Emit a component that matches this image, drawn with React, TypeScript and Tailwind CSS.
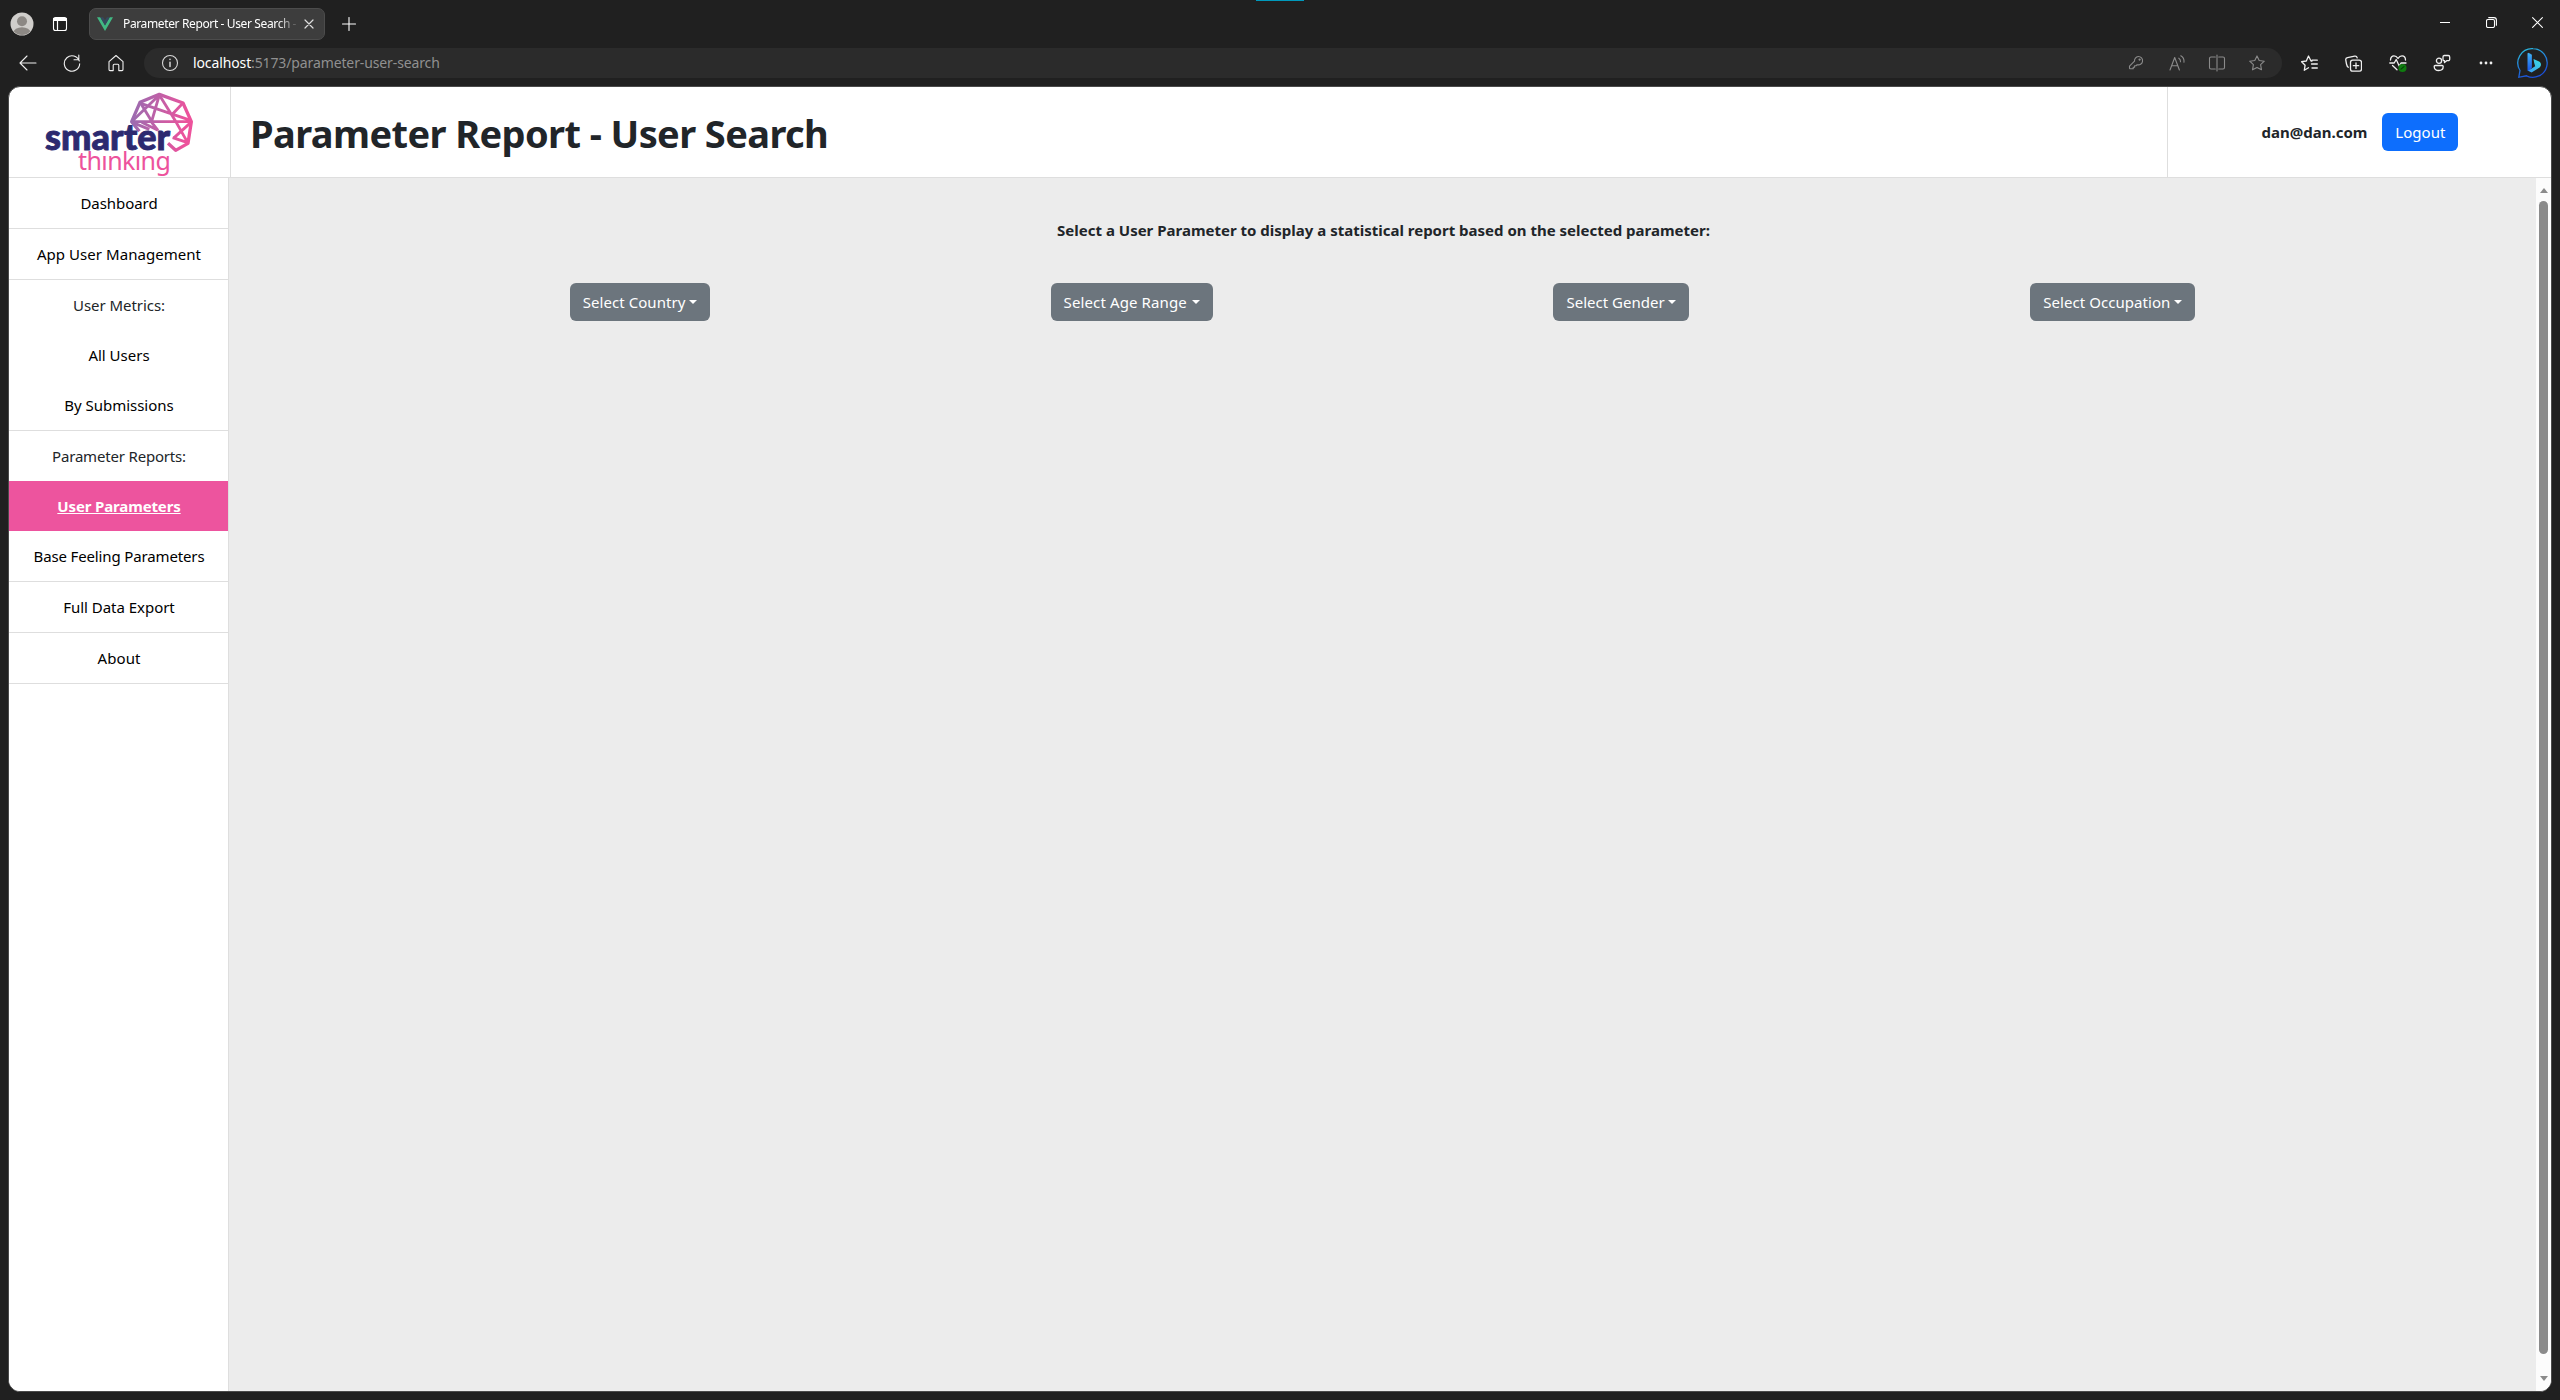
import React from 'react'

const SANS = "font-['Noto_Sans','Open_Sans',sans-serif]"

function Svg({ size = 16, className = '', children }: { size?: number; className?: string; children: React.ReactNode }) {
  return (
    <svg width={size} height={size} viewBox={`0 0 ${size} ${size}`} fill="none" stroke="currentColor" strokeWidth="1.1" strokeLinecap="round" strokeLinejoin="round" className={`block shrink-0 ${className}`}>
      {children}
    </svg>
  )
}

const STAR = 'M8 .9 10.2 5.500 15.300 6.200 11.600 9.700 12.500 14.800 8 12.400 3.500 14.800 4.400 9.700 .7 6.200 5.800 5.500Z'

function TitleBar() {
  return (
    <div className="flex h-[48px] items-center">
      <svg width="24" height="24" viewBox="0 0 24 24" className="ml-[10px] block shrink-0">
        <clipPath id="avatar"><circle cx="12" cy="12" r="11" /></clipPath>
        <circle cx="12" cy="12" r="11.500" fill="#d0cecb" />
        <g clipPath="url(#avatar)">
          <circle cx="12" cy="9.200" r="5" fill="#8c8884" />
          <ellipse cx="12" cy="20.500" rx="8.500" ry="5.200" fill="#8c8884" />
        </g>
      </svg>
      <Svg size={16} className="ml-[18px] text-white">
        <rect x="1.500" y="1.500" width="13" height="13" rx="2" />
        <path d="M1.500 2.600h13M1.500 4.200h13M5.500 5v9.500" strokeWidth="1.200" />
        <path d="M2 2.500h12v2H2z" fill="currentColor" />
      </Svg>
      <div className="ml-[21px] flex h-[32px] w-[236px] items-center rounded-[7px] border border-[#4c4c4c] bg-[#3d3d3d]">
        <svg width="16" height="16" viewBox="0 0 16 16" className="ml-[7px] mt-[-1px] block shrink-0">
          <path d="M0 1.200h3.300L8 9.300l4.700-8.100H16L8 15Z" fill="#41b883" />
          <path d="M3.200 1.200h3L8 4.300l1.800-3.100h3L8 9.400Z" fill="#35495e" />
        </svg>
        <div className="ml-[10px] w-[173px] whitespace-nowrap text-[12px] leading-[16px] tracking-[-0.37px] text-white [mask-image:linear-gradient(to_right,black_155px,transparent_176px)]">
          Parameter Report - User Search -
        </div>
        <Svg size={10} className="ml-[8px] text-[#dedede]"><path d="m1 1 8 8M9 1 1 9" strokeWidth="1.200" /></Svg>
      </div>
      <Svg size={14} className="ml-[17px] text-white"><path d="M7 .5v13M.5 7h13" /></Svg>
      <div className="ml-auto mt-[-4px] flex items-center text-white">
        <Svg size={10}><path d="M0 5.500h10" strokeWidth="1" /></Svg>
        <Svg size={11} className="ml-[36px]"><rect x=".5" y="2.500" width="8" height="8" rx="1.500" /><path d="M2.700.6H8a2.400 2.400 0 0 1 2.400 2.400v5.200" /></Svg>
        <Svg size={11} className="ml-[35px] mr-[17px]"><path d="m.6.600 9.800 9.800M10.400.600.600 10.400" /></Svg>
      </div>
    </div>
  )
}

function Toolbar() {
  return (
    <div className="flex h-[30px] items-center text-[#efefef]">
      <Svg size={18} className="ml-[19px]"><path d="M8 2 1 9l7 7M1.200 9H17" /></Svg>
      <Svg size={18} className="ml-[26px]"><path d="M16.300 7A7.700 7.700 0 1 0 16.700 9.800M15.800 1v4.800H11" /></Svg>
      <Svg size={18} className="ml-[26px]"><path d="M2 7.600 9 1.500l7 6.100v8a1 1 0 0 1-1 1h-3.200v-5.400a1 1 0 0 0-1-1H7.200a1 1 0 0 0-1 1v5.400H3a1 1 0 0 1-1-1Z" /></Svg>
      <div className="ml-[19px] flex h-[30px] w-[2138px] items-center rounded-full bg-[#2b2b2b]">
        <Svg size={18} className="ml-[17px] text-[#d8d8d8]"><circle cx="9" cy="9" r="7.500" /><path d="M9 8.200v4.200M9 5.300v.2" strokeWidth="1.500" /></Svg>
        <div className="ml-[14px] whitespace-nowrap text-[14px] leading-[20px] tracking-[-0.12px] text-[#909090]">
          <span className="text-white">localhost</span>:5173/parameter-user-search
        </div>
        <div className="ml-auto mr-[17px] flex items-center text-[#8b8b8b]">
          <Svg size={16}>
            <path d="M10.300 1.500a4.200 4.200 0 1 1-1.200 8.200L8 10.800H6.600v1.500H5.200v1.500H2.200a.7.700 0 0 1-.7-.7v-1.900l5-5A4.200 4.200 0 0 1 10.300 1.500Z" />
            <circle cx="11.600" cy="4.600" r=".6" fill="currentColor" />
          </Svg>
          <Svg size={17} className="ml-[25px]"><path d="m1 15 4.700-12.500L10.400 15M2.600 10.800h6.200M9.800 3.200c1.200.8 1.800 2 1.700 3.600M11.800.8c2.300 1.300 3.500 3.400 3.200 6.400" /></Svg>
          <Svg size={18} className="ml-[22px]"><path d="M7.300 3H3a1.500 1.500 0 0 0-1.500 1.500v9A1.500 1.500 0 0 0 3 15h4.300M10.700 3H15a1.500 1.500 0 0 1 1.500 1.500v9A1.500 1.500 0 0 1 15 15h-4.300M9 1v16" /></Svg>
          <Svg size={16} className="ml-[23px]"><path d={STAR} /></Svg>
        </div>
      </div>
      <Svg size={17} className="ml-[19px]"><path d="M11 6H10L7.500 1 5.300 6 .6 6.700l3.500 3.500-.8 5.100L7.500 12.800M11 5.200h5.300M10.500 9h5.800M11 13h5.300" strokeWidth="1.300" /></Svg>
      <Svg size={17} className="ml-[27px]">
        <rect x="5.500" y="5.200" width="11" height="11" rx="2.200" strokeWidth="1.300" /><path d="M11 8v5.400M8.300 10.700h5.400" strokeWidth="1.300" />
        <path d="M3.300 12.200C2 11.500 1.800 10.500 1.500 9L.8 5.200A2.200 2.200 0 0 1 2.500 2.600L9.600 1.200a2.200 2.200 0 0 1 2.600 1.600" strokeWidth="1.300" />
      </Svg>
      <Svg size={18} className="ml-[27px]">
        <path d="M1.500 6C1.500 3.500 3 1.800 5 1.800c1.700 0 3 1 4 2.700 1-1.700 2.300-2.700 4-2.700 2 0 3.500 1.700 3.500 4.200M.8 9h4.400l2-3.500 3 6.500 1.800-3H17M3.500 11.500l4.500 4.300" strokeWidth="1.300" />
        <circle cx="13.500" cy="14" r="4" fill="#0f7b0f" stroke="none" /><path d="m12 15.200 3-2.600" stroke="#06400a" />
      </Svg>
      <Svg size={18} className="ml-[26px]">
        <circle cx="6" cy="6.800" r="2.600" strokeWidth="1.300" />
        <path d="M2.200 11.500h7a1 1 0 0 1 1 1c0 2.500-1.700 4-4.500 4s-4.500-1.500-4.500-4a1 1 0 0 1 1-1ZM11.200 1.500h4a1.500 1.500 0 0 1 1.500 1.500v2.200a1.500 1.500 0 0 1-1.500 1.500h-1.500L11.500 8.500V6.700a1.300 1.300 0 0 1-1.500-1.300V3a1.400 1.400 0 0 1 1.200-1.500Z" strokeWidth="1.300" />
      </Svg>
      <Svg size={16} className="ml-[27px]"><g fill="currentColor" stroke="none"><circle cx="3" cy="8" r="1.400" /><circle cx="8" cy="8" r="1.400" /><circle cx="13" cy="8" r="1.400" /></g></Svg>
      <svg width="32" height="32" viewBox="0 0 32 32" className="ml-auto mr-[11px] block shrink-0">
        <defs>
          <linearGradient id="ring" x1="0" y1="0" x2=".4" y2="1"><stop offset="0" stopColor="#2bc0dc" /><stop offset="1" stopColor="#1b4fd8" /></linearGradient>
          <linearGradient id="stem" x1="0" y1="0" x2="0" y2="1"><stop offset="0" stopColor="#3fb3f4" /><stop offset="1" stopColor="#1a56e8" /></linearGradient>
          <linearGradient id="bowl" x1="1" y1="0" x2="0" y2="1"><stop offset="0" stopColor="#3ae0e0" /><stop offset="1" stopColor="#3b9bf5" /></linearGradient>
        </defs>
        <path d="M16 1.700A14.300 14.300 0 1 1 9.500 28.800L1.800 30.300 3 23.500A14.300 14.300 0 0 1 16 1.700Z" fill="none" stroke="url(#ring)" strokeWidth="1.300" />
        <path d="M11 6.200 14.300 7.700v13.200L11 23.800Z" fill="url(#stem)" stroke="url(#stem)" strokeLinejoin="round" />
        <path d="m16.500 12 5.600 2.600c2.300 1.100 2.500 4.500.5 6L14.600 25.500 11 23.800l7.200-4.500-1-3.300Z" fill="url(#bowl)" />
      </svg>
    </div>
  )
}

function Logo() {
  return (
    <div className="relative h-[90px] w-[222px] shrink-0 border-r border-[#dedede]">
      <svg width="65" height="61" viewBox="387 36 195 183" className="absolute left-[120px] top-[5px]" fill="none" stroke="url(#brain)" strokeWidth="10" strokeLinejoin="round">
        <linearGradient id="brain" gradientUnits="userSpaceOnUse" x1="392" y1="120" x2="560" y2="140">
          <stop offset="0" stopColor="#9a6cb0" /><stop offset="1" stopColor="#ed529c" />
        </linearGradient>
        <path d="M418 154 395 125 420 67 478 43 549 69 574 125 564 190 527 211 504 190" />
        <path d="M395 125H574M397 123 478 45M422 70 455 124M478 45 455 124M422 70 572 121M478 45 527 124M549 69 515 105M397 127 448 148M425 127 474 151M455 127 474 151M572 128 520 175M527 124 563 188M518 173 563 188" strokeWidth="8.500" />
      </svg>
      <div className="absolute left-[36px] top-[31px] h-[34px] font-['Lato'] text-[36px] font-black leading-[36px] tracking-[0.1px] text-[#2c2a70] [-webkit-text-stroke:0.9px_#2c2a70]">smarter</div>
      <div className="absolute left-[69px] top-[61px] h-[29px] font-['Noto_Sans'] text-[25px] leading-[24px] tracking-[-0.6px] text-[#ed529c]">thınkıng</div>
    </div>
  )
}

type Item = { label: string; look?: 'heading' | 'active'; line?: boolean; track: string }

const NAV: Item[] = [
  { label: 'Dashboard', line: true, track: 'tracking-[-0.05px]' },
  { label: 'App User Management', line: true, track: 'tracking-[0.05px]' },
  { label: 'User Metrics:', look: 'heading', track: 'tracking-[-0.05px]' },
  { label: 'All Users', track: 'tracking-[0px]' },
  { label: 'By Submissions', line: true, track: 'tracking-[-0.03px]' },
  { label: 'Parameter Reports:', look: 'heading', track: 'tracking-[-0.18px]' },
  { label: 'User Parameters', look: 'active', track: 'tracking-[-0.14px]' },
  { label: 'Base Feeling Parameters', line: true, track: 'tracking-[-0.14px]' },
  { label: 'Full Data Export', line: true, track: 'tracking-[-0.03px]' },
  { label: 'About', line: true, track: 'tracking-[0.1px]' },
]

function Sidebar() {
  return (
    <nav className="w-[220px] shrink-0 border-r border-[#dedede] bg-white">
      {NAV.map((n) => (
        <div key={n.label} className={n.line ? 'border-b border-[#dedede]' : ''}>
          <div className={`flex h-[50px] items-center justify-center pl-[1px] text-[15px] ${n.track} ${n.look === 'active' ? 'bg-[#ed549e] font-bold text-white underline' : n.look === 'heading' ? 'text-[#212529]' : 'text-black'}`}>
            {n.label}
          </div>
        </div>
      ))}
    </nav>
  )
}

const FILTERS = [
  { label: 'Select Country', w: 'w-[140px]', track: 'tracking-[0.05px]' },
  { label: 'Select Age Range', w: 'w-[162px]', track: 'tracking-[0.12px]' },
  { label: 'Select Gender', w: 'w-[136px]', track: 'tracking-[0.02px]' },
  { label: 'Select Occupation', w: 'w-[165px]', track: 'tracking-[0.06px]' },
]

function Report() {
  return (
    <main className="min-w-0 flex-1 bg-[#ececec]">
      <p className="mt-[40px] pl-[2px] text-center text-[15px] font-bold leading-[24px] tracking-[0px] text-[#212529]">
        Select a User Parameter to display a statistical report based on the selected parameter:
      </p>
      <div className="mt-[41px] flex justify-evenly">
        {FILTERS.map((f) => (
          <button key={f.label} className={`flex h-[38px] items-center justify-between whitespace-nowrap rounded-[6px] bg-[#6c757d] px-[13px] text-[15px] text-white ${f.w} ${f.track}`}>
            {f.label}
            <span className="mt-[-1px] h-0 w-0 border-x-[4px] border-t-[4.5px] border-x-transparent border-t-white" />
          </button>
        ))}
      </div>
    </main>
  )
}

function Scrollbar() {
  return (
    <div className="flex w-[15px] shrink-0 flex-col items-center bg-[#fcfcfc]">
      <div className="mt-[10px] h-0 w-0 border-x-[4.5px] border-b-[5px] border-x-transparent border-b-[#8b8b8b]" />
      <div className="mt-[8px] h-[1153px] w-[9px] rounded-full bg-[#8b8b8b]" />
      <div className="mt-[22px] h-0 w-0 border-x-[4.5px] border-t-[5px] border-x-transparent border-t-[#8b8b8b]" />
    </div>
  )
}

export default function App() {
  return (
    <div className={`relative flex h-[1400px] w-[2560px] flex-col overflow-hidden bg-[#202020] ${SANS}`}>
      <div className="absolute left-[1256px] top-0 h-[1px] w-[48px] bg-[#0099bc]" />
      <TitleBar />
      <Toolbar />
      <div className="ml-[8px] mt-[8px] flex h-[1306px] w-[2544px] flex-col overflow-hidden rounded-[12px] border border-[#4a4a4a] bg-white">
        <header className="flex h-[91px] shrink-0 border-b border-[#dedede]">
          <Logo />
          <h1 className="flex min-w-0 flex-1 items-center whitespace-nowrap pl-[19px] pt-[2px] text-[38px] font-bold tracking-[-0.6px] text-[#212529]">
            Parameter Report - User Search
          </h1>
          <div className="flex w-[384px] items-center justify-center gap-[15px] border-l border-[#dedede] pl-[1px]">
            <span className="text-[15px] font-bold text-[#212529]">dan@dan.com</span>
            <button className="h-[38px] w-[76px] rounded-[6px] bg-[#0d6efd] text-[15px] tracking-[0.05px] text-white">Logout</button>
          </div>
        </header>
        <div className="flex min-h-0 flex-1">
          <Sidebar />
          <Report />
          <Scrollbar />
        </div>
      </div>
    </div>
  )
}
